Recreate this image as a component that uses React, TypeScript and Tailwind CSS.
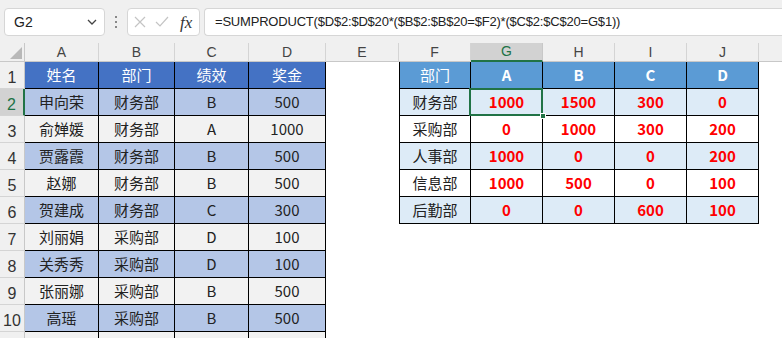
import React from "react";

const colW = [
  "w-[74px]",
  "w-[76px]",
  "w-[74px]",
  "w-[77px]",
  "w-[73px]",
  "w-[72px]",
  "w-[72px]",
  "w-[72px]",
  "w-[72px]",
  "w-[72px]",
];
const letters = ["A", "B", "C", "D", "E", "F", "G", "H", "I", "J"];

const left: string[][] = [
  ["姓名", "部门", "绩效", "奖金"],
  ["申向荣", "财务部", "B", "500"],
  ["俞婵媛", "财务部", "A", "1000"],
  ["贾露霞", "财务部", "B", "500"],
  ["赵娜", "财务部", "B", "500"],
  ["贺建成", "财务部", "C", "300"],
  ["刘丽娟", "采购部", "D", "100"],
  ["关秀秀", "采购部", "D", "100"],
  ["张丽娜", "采购部", "B", "500"],
  ["高瑶", "采购部", "B", "500"],
  ["", "", "", ""],
];

const right: string[][] = [
  ["部门", "A", "B", "C", "D"],
  ["财务部", "1000", "1500", "300", "0"],
  ["采购部", "0", "1000", "300", "200"],
  ["人事部", "1000", "0", "0", "200"],
  ["信息部", "1000", "500", "0", "100"],
  ["后勤部", "0", "0", "600", "100"],
];

function Cell({ r, c }: { r: number; c: number }) {
  const w = colW[c];
  if (c <= 3) {
    const txt = left[r][c];
    let bg = "bg-[#F2F2F2] text-[#222]";
    if (r === 0) bg = "bg-[#4472C4] text-white";
    else if (r % 2 === 1) bg = "bg-[#B4C6E7] text-[#222]";
    return (
      <div
        className={`${w} h-full shrink-0 border-r border-b border-black flex items-center justify-center ${bg}`}
      >
        {txt}
      </div>
    );
  }
  if (c === 4) {
    return <div className={`${w} h-full shrink-0 bg-white`} />;
  }
  const rc = c - 5;
  if (r <= 5) {
    const txt = right[r][rc];
    let bg = "bg-white";
    if (r === 0) bg = "bg-[#5B9BD5] text-white font-bold";
    else if (r % 2 === 1) bg = "bg-[#DDEBF7]";
    const color =
      r === 0 ? "" : rc === 0 ? "text-[#222]" : "text-[#FF0000] font-bold";
    const leftB = rc === 0 ? "border-l" : "";
    const isSel = r === 1 && rc === 1;
    return (
      <div
        className={`${w} h-full shrink-0 border-r border-b border-black ${leftB} flex items-center justify-center relative ${bg} ${color} ${isSel ? "z-10" : ""}`}
      >
        {r === 0 && rc === 0 ? <span className="font-normal">{txt}</span> : txt}
        {isSel && (
          <>
            <div className="absolute left-[-2px] top-[-1px] right-[-1px] bottom-[-1px] border-2 border-[#217346] pointer-events-none" />
            <div className="absolute right-[-4px] bottom-[-4px] w-[6px] h-[6px] bg-[#217346] border border-white" />
          </>
        )}
      </div>
    );
  }
  return <div className={`${w} h-full shrink-0 bg-white`} />;
}

export default function App() {
  const rows = Array.from({ length: 11 }, (_, i) => i);
  return (
    <div
      className="w-[782px] h-[338px] overflow-hidden bg-white text-[15px]"
      style={{ fontFamily: '"Noto Sans CJK SC", "Liberation Sans", sans-serif' }}
    >
      {/* formula bar */}
      <div className="h-[43px] bg-[#F0F0F0] flex items-start pt-[8px] pl-[4px]">
        <div className="w-[101px] h-[28px] bg-white border border-[#D6D6D6] rounded-[4px] flex items-center justify-between pl-[9px] pr-[6px] text-[14px] text-[#222]">
          <span style={{ fontFamily: '"Liberation Sans", sans-serif' }}>G2</span>
          <svg width="12" height="12" viewBox="0 0 12 12">
            <path d="M2 4 L6 8 L10 4" fill="none" stroke="#444" strokeWidth="1.3" />
          </svg>
        </div>
        <div className="w-[22px] h-[28px] flex flex-col items-center justify-center gap-[3px]">
          <div className="w-[2px] h-[2px] bg-[#888]" />
          <div className="w-[2px] h-[2px] bg-[#888]" />
          <div className="w-[2px] h-[2px] bg-[#888]" />
        </div>
        <div className="w-[73px] h-[28px] bg-white border border-[#D6D6D6] rounded-[4px] flex items-center pl-[6px] gap-[9px]">
          <svg width="12" height="12" viewBox="0 0 12 12">
            <path d="M1 1 L11 11 M11 1 L1 11" stroke="#C4C4C4" strokeWidth="1.2" />
          </svg>
          <svg width="14" height="12" viewBox="0 0 14 12">
            <path d="M1 6 L5 10 L13 1" fill="none" stroke="#C4C4C4" strokeWidth="1.2" />
          </svg>
          <span
            className="italic text-[17px] text-[#333] leading-none ml-[2px]"
            style={{ fontFamily: '"Liberation Serif", serif' }}
          >
            fx
          </span>
        </div>
        <div
          className="ml-[4px] flex-1 h-[28px] bg-white border border-r-0 border-[#D6D6D6] rounded-l-[4px] flex items-center pl-[10px] text-[13px] tracking-[-0.2px] text-[#222]"
          style={{ fontFamily: '"Liberation Sans", sans-serif' }}
        >
          =SUMPRODUCT($D$2:$D$20*($B$2:$B$20=$F2)*($C$2:$C$20=G$1))
        </div>
      </div>
      {/* column headers */}
      <div
        className="h-[19px] flex bg-[#F0F0F0] text-[14px] text-[#444]"
        style={{ fontFamily: '"Liberation Sans", sans-serif' }}
      >
        <div className="w-[25px] h-full shrink-0 border-r border-b border-[#C8C8C8] relative">
          <div
            className="absolute right-[2px] bottom-[2px] w-[12px] h-[12px] bg-[#B8B8B8]"
            style={{ clipPath: "polygon(100% 0, 100% 100%, 0 100%)" }}
          />
        </div>
        {letters.map((l, i) =>
          i === 6 ? (
            <div
              key={l}
              className={`${colW[i]} h-full shrink-0 border-r border-[#C8C8C8] border-b-2 border-b-[#217346] bg-[#D2D2D2] text-[#217346] flex items-center justify-center`}
            >
              {l}
            </div>
          ) : (
            <div
              key={l}
              className={`${colW[i]} h-full shrink-0 border-r border-b border-[#D4D4D4] border-b-[#C8C8C8] flex items-center justify-center`}
            >
              {l}
            </div>
          )
        )}
        <div className="flex-1 h-full border-b border-[#C8C8C8]" />
      </div>
      {/* rows */}
      {rows.map((r) => (
        <div key={r} className="h-[27px] flex">
          <div
            className={`w-[25px] h-full shrink-0 border-b border-[#D4D4D4] flex items-end justify-center text-[16px] leading-none pb-[2px] ${
              r === 1
                ? "bg-[#D2D2D2] text-[#217346] border-r-2 border-r-[#217346]"
                : "bg-[#F0F0F0] text-[#333] border-r border-r-[#C8C8C8]"
            }`}
            style={{ fontFamily: '"Liberation Sans", sans-serif' }}
          >
            {r < 10 ? r + 1 : ""}
          </div>
          {letters.map((_, c) => (
            <Cell key={c} r={r} c={c} />
          ))}
          <div className="flex-1 h-full bg-white" />
        </div>
      ))}
    </div>
  );
}
